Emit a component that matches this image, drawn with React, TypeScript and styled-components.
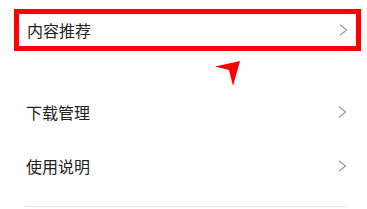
import styled, { createGlobalStyle } from "styled-components";

const GlobalStyle = createGlobalStyle`
  html, body {
    margin: 0;
    padding: 0;
    background: #fff;
  }
  body {
    font-family: "Noto Sans CJK SC", "Noto Sans", sans-serif;
  }
`;

const Page = styled.div`
  position: relative;
  width: 367px;
  height: 209px;
  overflow: hidden;
  background: #fff;
  padding-top: 9px;
  box-sizing: border-box;
`;

const HighlightRow = styled.div`
  display: flex;
  align-items: center;
  justify-content: space-between;
  box-sizing: border-box;
  margin-left: 14px;
  width: 347px;
  height: 42px;
  border: 5px solid #ff0000;
  padding: 0 8px 0 8px;
`;

const List = styled.div`
  display: flex;
  flex-direction: column;
  margin-top: 34px;
`;

const Row = styled.div`
  display: flex;
  align-items: center;
  justify-content: space-between;
  height: 54px;
  padding: 0 20px 0 26px;
`;

const Label = styled.span`
  font-size: 16px;
  color: #222;
  line-height: 1;
`;

const Divider = styled.div`
  margin: 13px 21px 0 25px;
  height: 1px;
  background: #e6e6e6;
`;

const Pointer = styled.svg`
  position: absolute;
  left: 205px;
  top: 58px;
`;

function Chevron() {
  return (
    <svg width="9" height="12" viewBox="0 0 9 12">
      <path d="M1 0.8 L7.6 6 L1 11.2" fill="none" stroke="#9a9a9a" strokeWidth="1.2" />
    </svg>
  );
}

function App() {
  return (
    <Page>
      <GlobalStyle />
      <HighlightRow>
        <Label>内容推荐</Label>
        <Chevron />
      </HighlightRow>
      <List>
        <Row>
          <Label>下载管理</Label>
          <Chevron />
        </Row>
        <Row>
          <Label>使用说明</Label>
          <Chevron />
        </Row>
      </List>
      <Divider />
      <Pointer width="40" height="32" viewBox="0 0 40 32">
        <path d="M35 3 L10 8.5 L24 12 L28 28 Z" fill="#ff0000" />
      </Pointer>
    </Page>
  );
}

export default App;
